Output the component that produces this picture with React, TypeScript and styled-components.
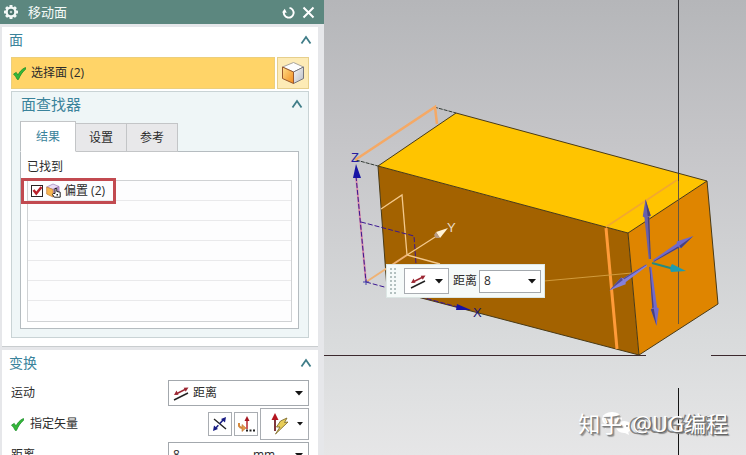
import React from 'react';
import styled, { createGlobalStyle, css } from 'styled-components';

const GlobalStyle = createGlobalStyle`
  *, *::before, *::after { box-sizing: border-box; }
  body { margin: 0; }
  body, button, input, select {
    font-family: 'Open Sans', 'Noto Sans CJK SC', sans-serif;
    font-size: 12px;
    line-height: 16px;
    color: #2b2b2b;
  }
  svg { display: block; }
`;

const Workspace = styled.main`
  display: grid;
  grid-template-columns: 324px minmax(0, 1fr);
  height: 100vh;
  overflow: hidden;
`;

const Dialog = styled.section`
  display: flex;
  flex-direction: column;
  min-width: 0;
  overflow: hidden;
  background: #e6e7ea;
`;

const TitleBar = styled.header`
  display: flex;
  align-items: center;
  gap: 9px;
  flex: none;
  height: 24px;
  padding: 0 9px 0 3px;
  background: #5c877f;
`;

const DialogTitle = styled.h1`
  flex: 1;
  margin: 0;
  font-size: 13px;
  line-height: 20px;
  font-weight: 400;
  color: #f4faf8;
`;

const IconButton = styled.button`
  display: grid;
  place-items: center;
  flex: none;
  padding: 0;
  border: 0;
  background: none;
`;

const TitleActions = styled.div`
  display: flex;
  gap: 7px;
`;

const Sections = styled.div`
  display: flex;
  flex-direction: column;
  gap: 3px;
  padding: 3px 6px 0 2px;
`;

const Section = styled.section`
  display: flex;
  flex-direction: column;
  padding: 0 9px 8px;
  background: #fff;
  border-bottom: 1px solid #c9cdcf;
`;

const SectionHead = styled.div<{ $inset?: boolean }>`
  display: flex;
  align-items: center;
  justify-content: space-between;
  height: ${p => (p.$inset ? 24 : 26)}px;
  padding: ${p => (p.$inset ? '0 5px 0 9px' : '0')};
  margin-right: ${p => (p.$inset ? 0 : -3)}px;
  margin-left: ${p => (p.$inset ? 0 : -2)}px;
`;

const SectionTitle = styled.h2<{ $large?: boolean }>`
  margin: 0;
  font-size: ${p => (p.$large ? 15 : 14)}px;
  line-height: 20px;
  font-weight: 400;
  color: #3a839b;
`;

const SelectionRow = styled.div`
  display: flex;
  gap: 2px;
  height: 32px;
  margin: 4px 0 2px;
`;

const SelectionBar = styled.button`
  display: flex;
  align-items: center;
  gap: 5px;
  flex: 1;
  padding: 0 1px;
  border: 1px solid #eccf7c;
  background: #ffd468;
  text-align: left;
`;

const CubeButton = styled(IconButton)`
  width: 32px;
  border: 1px solid #e6cf8c;
  background: #fdebb6;
`;

const Finder = styled.div`
  display: flex;
  flex-direction: column;
  padding: 0 9px 8px 8px;
  border: 1px solid #c9d3d5;
  background: #eff6f7;
`;

const FinderHead = styled.div`
  margin: 0 -9px 5px -8px;
`;

const Tabs = styled.div`
  display: flex;
  align-items: flex-end;
  position: relative;
`;

const Tab = styled.button<{ $active?: boolean }>`
  width: 51px;
  height: 29px;
  padding: 0;
  border: 1px solid #c3c5c7;
  border-left: 0;
  background: #e8e8ea;
  ${p =>
    p.$active &&
    css`
      width: 56px;
      height: 31px;
      border-left: 1px solid #b9bfc2;
      border-bottom-color: #fff;
      background: #fff;
      color: #3a839b;
    `}
`;

const TabPane = styled.div`
  display: flex;
  flex-direction: column;
  margin-top: -1px;
  padding: 7px 6px 6px;
  border: 1px solid #b5bcc0;
  background: #fff;
`;

const PaneLabel = styled.span`
  margin-bottom: 5px;
`;

const ResultList = styled.ul`
  margin: 0;
  padding: 0 0 20px;
  list-style: none;
  border: 1px solid #d0d2d4;
  background: #fdfdfe;
`;

const ResultItem = styled.li`
  position: relative;
  display: flex;
  align-items: center;
  height: 20px;
  padding-left: 3px;
  border-bottom: 1px solid #e9e9eb;
`;

const Highlight = styled.span`
  position: absolute;
  top: -3px;
  left: -7px;
  width: 95px;
  height: 26px;
  border: 3px solid #c24a50;
  pointer-events: none;
`;

const CheckLabel = styled.label`
  display: flex;
  align-items: center;
  gap: 3px;
  position: relative;
`;

const CheckBox = styled.input`
  appearance: none;
  width: 12px;
  height: 12px;
  margin: 0;
  border: 1px solid #2b2426;
  background: #fff;
  & + svg { position: absolute; left: 1px; top: 2px; visibility: hidden; }
  &:checked + svg { visibility: visible; }
`;

const FormRow = styled.div`
  display: grid;
  grid-template-columns: 157px minmax(0, 1fr);
  align-items: center;
`;

const Form = styled.div`
  display: flex;
  flex-direction: column;
  gap: 2px;
  padding-top: 4px;
`;

const FieldLabel = styled.label`
  display: flex;
  align-items: center;
  gap: 6px;
`;

const Field = styled.div`
  display: flex;
  align-items: center;
  gap: 3px;
  height: 26px;
  padding: 0 5px 0 4px;
  border: 1px solid #a3a8ad;
  background: #fff;
`;

const PlainSelect = styled.select`
  appearance: none;
  flex: 1;
  min-width: 0;
  padding: 0;
  border: 0;
  background: none;
  outline: none;
`;

const UnitSelect = styled(PlainSelect)`
  flex: none;
  width: 39px;
`;

const PlainInput = styled.input`
  flex: 1;
  width: 0;
  min-width: 0;
  padding: 0;
  border: 0;
  background: none;
  outline: none;
`;

const VectorTools = styled.div`
  display: flex;
  align-items: center;
  justify-content: flex-end;
  gap: 2px;
`;

const ToolButton = styled(IconButton)<{ $menu?: boolean }>`
  display: flex;
  align-items: center;
  justify-content: ${p => (p.$menu ? 'space-between' : 'center')};
  width: ${p => (p.$menu ? 49 : 24)}px;
  height: ${p => (p.$menu ? 32 : 24)}px;
  padding: ${p => (p.$menu ? '0 5px 0 10px' : '0')};
  border: 1px solid #a9adb2;
  background: #fff;
`;

const Viewport = styled.section`
  position: relative;
  overflow: hidden;
  background: linear-gradient(#b5b6b9, #c6c6c9 33%, #d9dbdc 75%, #e6e6e7);
`;

const Scene = styled.svg`
  width: 100%;
  height: 100%;
`;

const FloatingBar = styled.div`
  position: absolute;
  top: 264px;
  left: 62px;
  display: flex;
  align-items: center;
  gap: 3px;
  height: 34px;
  padding: 0 3px 0 2px;
  border: 1px solid #dce6e4;
  background: #f5faf9;
`;

const MotionButton = styled(ToolButton)`
  width: 45px;
  height: 26px;
  padding: 0 5px;
  margin: 0 1px 0 4px;
`;

const DistanceField = styled(Field)`
  width: 62px;
  height: 23px;
  margin-left: -1px;
  padding: 0 4px;
`;

const Watermark = styled.div`
  position: absolute;
  right: 18px;
  bottom: 16px;
  display: flex;
  align-items: center;
  gap: 10px;
  font-size: 22px;
  line-height: 32px;
  color: #fff;
`;

const LogoMark = styled.span`
  position: absolute;
  left: 22px;
  top: 4px;
`;

const SiteName = styled.span`
  position: relative;
  text-shadow: 1px 1px 1px #777, 2px 2px 1px #999;
`;

const AccountName = styled.span`
  position: relative;
  text-shadow: 1px 1px 0 #666, 2px 2px 1px #888, -4px 1px 0 #858585;
`;

const Chevron = () => (
  <svg width="12" height="10" viewBox="0 0 12 10" aria-hidden="true">
    <path d="M1.500 8.500 6 2l4.500 6.500" fill="none" stroke="#407d88" strokeWidth="1.800" />
  </svg>
);

const Caret = () => (
  <svg width="8" height="5" viewBox="0 0 8 5" aria-hidden="true">
    <path d="M0 0h8L4 4.500z" fill="#151515" />
  </svg>
);

const SmallCaret = () => (
  <svg width="6" height="4" viewBox="0 0 6 4" aria-hidden="true">
    <path d="M0 0h6L3 3.500z" fill="#151515" />
  </svg>
);

const GreenCheck = () => (
  <svg width="13" height="13" viewBox="0 0 12 12" aria-hidden="true">
    <path d="M.5 6.500 3 5l1.600 2.500C6 4.500 8 2 11.500.5l.2 1.500C8.500 4.500 6.500 8 5 11.500H4C3 9.500 2 8 .5 6.500z" fill="#35b93a" stroke="#168b24" strokeWidth=".7" />
  </svg>
);

const Gear = () => (
  <svg width="16" height="16" viewBox="0 0 16 16" aria-hidden="true">
    <g fill="#f3f8f6">
      {[0, 45, 90, 135].map(a => (
        <rect key={a} x="6.500" y="1" width="3" height="14" rx=".6" transform={`rotate(${a} 8 8)`} />
      ))}
      <circle cx="8" cy="8" r="5.500" />
    </g>
    <circle cx="8" cy="8" r="3.200" fill="#49736c" />
    <circle cx="8" cy="8" r="1.300" fill="#b9cdc8" />
  </svg>
);

const ResetIcon = () => (
  <svg width="13" height="13" viewBox="0 0 13 13" aria-hidden="true">
    <path d="M2 5.500A4.900 4.900 0 1 0 7.500 1.900" fill="none" stroke="#fff" strokeWidth="1.900" />
    <path d="M0 6.500 4.800 6.800 2.700 2.800z" fill="#fff" />
  </svg>
);

const CloseIcon = () => (
  <svg width="13" height="13" viewBox="0 0 13 13" aria-hidden="true">
    <path d="m1.500 1.500 10 10m0-10-10 10" stroke="#fff" strokeWidth="2" />
  </svg>
);

const Cube = () => (
  <svg width="24" height="24" viewBox="0 0 24 24" aria-hidden="true">
    <defs>
      <linearGradient id="cubeFront" x1="0" y1="0" x2="1" y2="1">
        <stop offset="0" stopColor="#ffe08a" />
        <stop offset="1" stopColor="#f18a1c" />
      </linearGradient>
      <linearGradient id="cubeSide" x1="0" y1="0" x2="1" y2="1">
        <stop offset="0" stopColor="#f7f7f7" />
        <stop offset="1" stopColor="#b9bcc4" />
      </linearGradient>
    </defs>
    <path d="m1.500 6 11-4.500L22.500 6l-10 5z" fill="#fdfdfd" stroke="#a9a59c" />
    <path d="m12.500 11 10-5v11.500l-10 5z" fill="url(#cubeSide)" stroke="#77777e" />
    <path d="m1.500 6 11 5v11.500l-11-5z" fill="url(#cubeFront)" stroke="#99582e" />
  </svg>
);

const OffsetIcon = () => (
  <svg width="15" height="15" viewBox="0 0 15 15" aria-hidden="true">
    <path d="M.7 4 7 1l6 2.500-6 3z" fill="#eadcf5" stroke="#a68bc0" strokeWidth=".8" />
    <path d="m7 6.500 6-3V11l-6 3z" fill="#c6a2db" stroke="#9475af" strokeWidth=".8" />
    <path d="m.7 4 6.300 2.500V14L.7 11z" fill="#f8b650" stroke="#c98543" strokeWidth=".8" />
    <path d="M9 10.500V5.500h1.800v3l3.400.7v5H8.300L6.500 11.500l.8-1z" fill="#fff" stroke="#222" />
    <path d="M10.500 11h1.500v1.500h-1.500z" fill="#222" />
  </svg>
);

const DistanceIcon = () => (
  <svg width="17" height="15" viewBox="0 0 17 15" aria-hidden="true">
    <path d="m3 8 10-5" stroke="#9c2733" strokeWidth="1.500" />
    <path d="m1 9 2.500-4.500 2 4.300zM15.500 1.500l-4.800.2 2 4z" fill="#9c2733" />
    <path d="m1 14 14-7" stroke="#222" strokeWidth="1.500" />
  </svg>
);

const ReverseIcon = () => (
  <svg width="16" height="16" viewBox="0 0 16 16" aria-hidden="true">
    <path d="m2 3 12 10" stroke="#222" strokeWidth="1.400" />
    <path d="m3 13 9-10" stroke="#1b1f84" strokeWidth="1.600" strokeDasharray="5 2" />
    <path d="m14 1-1 5.500L9 3zM1 15l1-5.500L6 13z" fill="#171b83" />
  </svg>
);

const VectorDialogIcon = () => (
  <svg width="18" height="17" viewBox="0 0 18 17" aria-hidden="true">
    <path d="M10 13V4" stroke="#b8232c" strokeWidth="1.500" />
    <path d="m10 0 2.500 5h-5z" fill="#a41620" />
    <path d="M2 7v3q1 2 4 2" fill="none" stroke="#d58a3d" strokeWidth="2" />
    <path d="M5 8.500 9 12l-4 3.500z" fill="#e59b4b" stroke="#b86d2c" strokeWidth=".6" />
    <path d="M9 13.500h2v2H9zm3.500 0h2v2h-2zm3.500 0h2v2h-2z" fill="#222" />
  </svg>
);

const VectorBoltIcon = () => (
  <svg width="19" height="24" viewBox="0 0 19 24" aria-hidden="true">
    <path d="M4 19V6" stroke="#722129" strokeWidth="1.800" />
    <path d="m4 1 3.500 7h-7z" fill="#b4151f" />
    <path d="m9.500 9 6.500-3-2.500 4.500 3.500-.5L4.500 22 9 15H5.500z" fill="#e7cd58" stroke="#806d2e" strokeWidth=".9" />
  </svg>
);

const WeChatMark = () => (
  <svg width="36" height="25" viewBox="0 0 36 25" aria-hidden="true">
    <ellipse cx="12" cy="8" rx="10" ry="7" fill="#fff" />
    <ellipse cx="24" cy="16" rx="8" ry="6" fill="#fff" />
    <path d="m6 13-1 5 6-4zm22 7 1 4-6-3z" fill="#fff" />
    <circle cx="21" cy="15" r="1" fill="#888" />
    <circle cx="27" cy="15" r="1" fill="#888" />
  </svg>
);

const Grip = () => (
  <svg width="8" height="28" viewBox="0 0 8 28" aria-hidden="true">
    {Array.from({ length: 7 }, (_, i) => (
      <path key={i} d={`M1 ${i * 4 + 1}h2v2H1zm4 0h2v2H5z`} fill="#b3c1c0" />
    ))}
  </svg>
);

type ArrowProps = { angle: number; length: number; x: number; y: number; color: string; edge: string };

const Arrow = ({ angle, length, x, y, color, edge }: ArrowProps) => (
  <g transform={`translate(${x} ${y}) rotate(${angle})`}>
    <path d={`M4 -1 ${length - 15} -2.500V2.500L4 1z`} fill={color} />
    <path d={`M4 1 ${length - 15} 2.500V1L4 .3z`} fill={edge} />
    <path d={`M${length - 17} -4 ${length} 0 ${length - 17} 4q-3-4 0-8z`} fill={color} />
    <path d={`M${length - 17} 4 ${length} 0 ${length - 17} 1z`} fill={edge} />
  </g>
);

const ModelScene = () => (
  <Scene viewBox="324 0 422 455" preserveAspectRatio="xMinYMin slice" role="img" aria-label="长方体模型">
    <path d="M324 355.500h322M711 355.500h35" stroke="#3c292e" />
    <path d="M678.500 388v67" stroke="#151515" />
    <g strokeLinejoin="round">
      <path d="m378 166 250 67 11 122-252-66z" fill="#a36200" />
      <path d="m456 113 251 68-79 52-250-67z" fill="#ffc400" />
      <path d="m628 233 79-52 11 123-79 51z" fill="#df8500" />
    </g>
    <path d="m378 166 250 67 11 122-252-66zM378 166l78-53 251 68-79 52M707 181l11 123-79 51" fill="none" stroke="#493a16" />
    <path d="m434 107 22 6M356 160l22 6" stroke="#333b35" strokeDasharray="4 1" />
    <path d="m355 160 80-53 2 17" fill="none" stroke="#f5a965" strokeWidth="2.500" />
    <path d="m606 227 71-47" stroke="#f2a830" strokeWidth="1.500" />
    <path d="m606 228 11 121" stroke="#ff9b38" strokeWidth="3" />
    <path d="M544 281l88-8" stroke="#d19b3c" />
    <path d="M678.500 0v181" stroke="#38383c" />
    <path d="M678.500 181v143" stroke="#69573b" />
    <path d="m366 282 41-27" stroke="#efb274" strokeWidth="2" />
    <path d="m381 209 21-14 5 60 33 9M407 255l36-23" fill="none" stroke="#f4c98c" strokeWidth="1.300" />
    <path d="m448 228-12 4 4 6z" fill="#fff2d6" />
    <path d="m436 232-2 3 2 3 4 0z" fill="#b79b85" />
    <path d="m356 176 10 106" stroke="#d98bab" strokeWidth="2" />
    <path d="m356 176 10 106M361 222l53 14 2 28M366 282l99 27" fill="none" stroke="#3a1690" strokeDasharray="5 2" />
    <path d="m356 164 5 14h-8z" fill="#1714a5" />
    <path d="m471 310-14-6-1 6z" fill="#1714a5" />
    <path d="M363 282h6m-3-3v6" stroke="#4540ab" />
    <g fontFamily="Liberation Sans, sans-serif" fontSize="13">
      <text x="351" y="162" fill="#251da0">Z</text>
      <text x="447" y="232" fill="#eadcc6">Y</text>
      <text x="473" y="317" fill="#1d166e">X</text>
    </g>
    <Arrow x={650} y={263} angle={-94} length={64} color="#6860aa" edge="#494174" />
    <Arrow x={650} y={263} angle={-32} length={51} color="#716acb" edge="#4a427c" />
    <Arrow x={650} y={263} angle={146} length={49} color="#8580dc" edge="#544c94" />
    <Arrow x={650} y={263} angle={84} length={63} color="#716acb" edge="#4a427c" />
    <g>
      <path d="m652 263 22 6" stroke="#258b80" strokeWidth="2" />
      <path d="m672 264 14 7-15 1q-2-4 1-8z" fill="#1d9caf" />
    </g>
  </Scene>
);

export default function App() {
  return (
    <>
      <GlobalStyle />
      <Workspace>
        <Dialog aria-label="移动面">
          <TitleBar>
            <Gear />
            <DialogTitle>移动面</DialogTitle>
            <TitleActions>
              <IconButton aria-label="重置"><ResetIcon /></IconButton>
              <IconButton aria-label="关闭"><CloseIcon /></IconButton>
            </TitleActions>
          </TitleBar>

          <Sections>
            <Section>
              <SectionHead>
                <SectionTitle>面</SectionTitle>
                <IconButton aria-label="折叠面"><Chevron /></IconButton>
              </SectionHead>
              <SelectionRow>
                <SelectionBar><GreenCheck />选择面 (2)</SelectionBar>
                <CubeButton aria-label="面规则"><Cube /></CubeButton>
              </SelectionRow>
              <Finder>
                <FinderHead>
                  <SectionHead $inset>
                    <SectionTitle $large>面查找器</SectionTitle>
                    <IconButton aria-label="折叠面查找器"><Chevron /></IconButton>
                  </SectionHead>
                </FinderHead>
                <Tabs role="tablist">
                  <Tab role="tab" aria-selected="true" $active>结果</Tab>
                  <Tab role="tab" aria-selected="false">设置</Tab>
                  <Tab role="tab" aria-selected="false">参考</Tab>
                </Tabs>
                <TabPane role="tabpanel">
                  <PaneLabel>已找到</PaneLabel>
                  <ResultList>
                    <ResultItem>
                      <CheckLabel>
                        <CheckBox type="checkbox" defaultChecked />
                        <svg width="11" height="11" viewBox="0 0 11 11" aria-hidden="true">
                          <path d="m1.500 5 2.800 3.500L9.500 2" fill="none" stroke="#b9202c" strokeWidth="2.500" />
                        </svg>
                        <OffsetIcon />
                        偏置 (2)
                      </CheckLabel>
                      <Highlight />
                    </ResultItem>
                    {Array.from({ length: 5 }, (_, i) => <ResultItem key={i} />)}
                  </ResultList>
                </TabPane>
              </Finder>
            </Section>

            <Section>
              <SectionHead>
                <SectionTitle>变换</SectionTitle>
                <IconButton aria-label="折叠变换"><Chevron /></IconButton>
              </SectionHead>
              <Form>
                <FormRow>
                  <FieldLabel htmlFor="motion">运动</FieldLabel>
                  <Field>
                    <DistanceIcon />
                    <PlainSelect id="motion"><option>距离</option></PlainSelect>
                    <Caret />
                  </Field>
                </FormRow>
                <FormRow>
                  <FieldLabel as="span"><GreenCheck />指定矢量</FieldLabel>
                  <VectorTools>
                    <ToolButton aria-label="反向"><ReverseIcon /></ToolButton>
                    <ToolButton aria-label="矢量对话框"><VectorDialogIcon /></ToolButton>
                    <ToolButton aria-label="自动判断的矢量" aria-haspopup="menu" $menu>
                      <VectorBoltIcon /><SmallCaret />
                    </ToolButton>
                  </VectorTools>
                </FormRow>
                <FormRow>
                  <FieldLabel htmlFor="distance">距离</FieldLabel>
                  <Field>
                    <PlainInput id="distance" defaultValue="8" />
                    <UnitSelect aria-label="单位"><option>mm</option></UnitSelect>
                    <Caret />
                  </Field>
                </FormRow>
              </Form>
            </Section>
          </Sections>
        </Dialog>

        <Viewport aria-label="图形窗口">
          <ModelScene />
          <FloatingBar>
            <Grip />
            <MotionButton aria-label="运动" aria-haspopup="menu" $menu>
              <DistanceIcon /><Caret />
            </MotionButton>
            <label htmlFor="dynamic-distance">距离</label>
            <DistanceField>
              <PlainInput id="dynamic-distance" defaultValue="8" />
              <Caret />
            </DistanceField>
          </FloatingBar>
          <Watermark>
            <LogoMark><WeChatMark /></LogoMark>
            <SiteName>知乎</SiteName>
            <AccountName>@UG编程</AccountName>
          </Watermark>
        </Viewport>
      </Workspace>
    </>
  );
}
